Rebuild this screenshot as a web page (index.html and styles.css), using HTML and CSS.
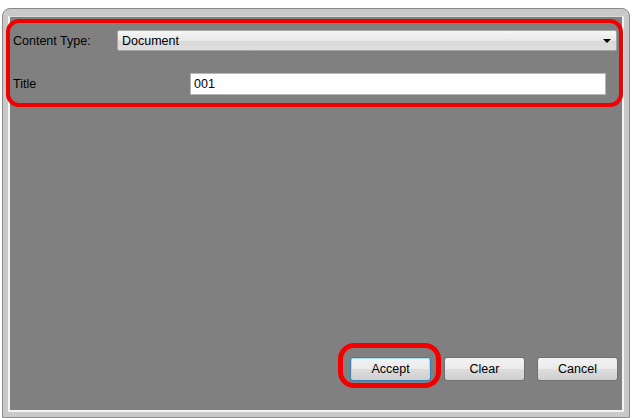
FILE: index.html
```html
<!DOCTYPE html>
<html lang="en">
<head>
    <meta charset="UTF-8">
    <title>Content Form</title>
    <link rel="stylesheet" href="styles.css">
</head>
<body>
    <div class="window">
        <div class="panel">
            <div class="row row-type">
                <label class="label label-type">Content Type:</label>
                <div class="combo">
                    <span>Document</span>
                    <span class="arrow"></span>
                </div>
            </div>
            <div class="row row-title">
                <label class="label label-title">Title</label>
                <input class="text-input" type="text" value="001">
            </div>
            <div class="spacer"></div>
            <div class="buttons">
                <button class="btn btn-focus">Accept</button>
                <button class="btn">Clear</button>
                <button class="btn btn-cancel">Cancel</button>
            </div>
        </div>
    </div>

    <!-- Red callouts -->
    <div class="callout callout-fields"></div>
    <div class="callout callout-accept"></div>
</body>
</html>
```

FILE: styles.css
```css
* {
    box-sizing: border-box;
    margin: 0;
    padding: 0;
}

body {
    width: 632px;
    height: 418px;
    overflow: hidden;
    background: #ffffff;
    font-family: 'Liberation Sans', Arial, sans-serif;
    font-size: 12.5px;
    color: #000;
    position: relative;
}

/* Window frame */
.window {
    margin: 8px 2px 0 2px;
    height: 410px;
    border: 1px solid #8a8a8a;
    border-radius: 8px 8px 0 0;
    background: #c9c9c9;
    padding: 7px 5px 5px 5px;
}

.panel {
    height: 100%;
    background: #808080;
    border-left: 2px solid #f4f4f4;
    border-right: 2px solid #f4f4f4;
    border-bottom: 2px solid #f4f4f4;
    border-top: 1px solid #d8d8d8;
    display: flex;
    flex-direction: column;
    padding: 13px 3px 29px 3px;
}

.row {
    display: flex;
    align-items: center;
}

.label {
    flex-shrink: 0;
}

.label-type { width: 104px; }
.label-title { width: 177px; }

.combo {
    flex: 1;
    height: 21px;
    margin-right: 2px;
    border: 1px solid #a6a6a6;
    border-radius: 2px;
    background: linear-gradient(#f6f6f6, #e8e8e8 50%, #d9d9d9 51%, #dedede);
    display: flex;
    align-items: center;
    justify-content: space-between;
    padding: 0 5px 0 4px;
}

.arrow {
    width: 0;
    height: 0;
    border-left: 4px solid transparent;
    border-right: 4px solid transparent;
    border-top: 4px solid #000;
}

.row-title {
    margin-top: 22px;
}

.text-input {
    flex: 1;
    height: 22px;
    margin-right: 13px;
    border: 1px solid #b5b5b5;
    background: #fff;
    font: inherit;
    padding: 0 3px;
    outline: none;
}

.spacer {
    flex: 1;
}

.buttons {
    display: flex;
    justify-content: flex-end;
    gap: 12px;
    padding-right: 1px;
}

.btn {
    width: 81px;
    height: 24px;
    font: inherit;
    color: #000;
    border: 1px solid #707070;
    border-radius: 3px;
    background: linear-gradient(#f2f2f2, #ebebeb 50%, #dddddd 51%, #cfcfcf);
}

.btn-focus {
    border-color: #3c7fb1;
    box-shadow: inset 0 0 0 1px #a8dcf4;
    margin-right: 1px;
}

/* Annotation outlines */
.callout {
    position: absolute;
    border: 4px solid #f00000;
}

.callout-fields {
    left: 6px;
    top: 19px;
    width: 617px;
    height: 88px;
    border-radius: 13px;
}

.callout-accept {
    left: 338px;
    top: 343px;
    width: 103px;
    height: 45px;
    border-radius: 16px;
    border-width: 5px;
}
```
